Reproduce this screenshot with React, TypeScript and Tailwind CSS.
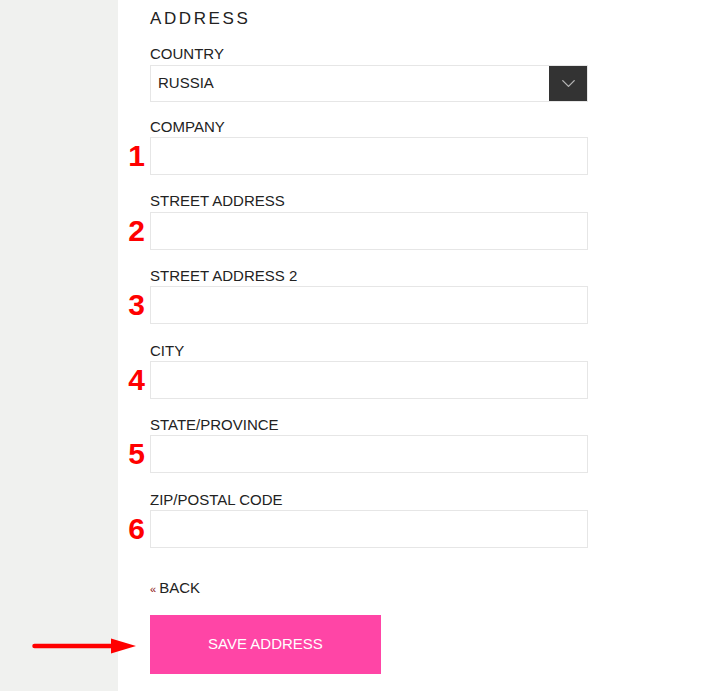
import { ChevronDown } from "lucide-react"

const fields = ["COMPANY", "STREET ADDRESS", "STREET ADDRESS 2", "CITY", "STATE/PROVINCE", "ZIP/POSTAL CODE"]

export default function App() {
  return (
    <div
      className="flex h-[691px] w-[702px] overflow-hidden bg-white text-[#222]"
      style={{ fontFamily: '"Liberation Sans", Arial, sans-serif' }}
    >
      {/* Sidebar */}
      <div className="w-[118px] shrink-0 bg-[#f0f1ef]" />

      {/* Form */}
      <div className="relative pl-[32px] pt-[8.6px]">
        <h2 className="text-[17px] leading-[20px] font-normal tracking-[2.6px]">ADDRESS</h2>

        <div className="mt-[16.5px]">
          <label className="block text-[15px] leading-[17px]">COUNTRY</label>
          <div className="mt-[3px] flex h-[37px] w-[438px] border border-[#e6e6e6]">
            <div className="flex flex-1 items-center pl-[7px] text-[15px]">RUSSIA</div>
            <div className="flex w-[38px] items-center justify-center bg-[#333]">
              <ChevronDown className="h-[23px] w-[23px] text-[#b5b5b5]" strokeWidth={1.4} />
            </div>
          </div>
        </div>

        <div className="mt-[15.7px] flex flex-col gap-[17.3px]">
          {fields.map((name, i) => (
            <div key={name}>
              <label className="block text-[15px] leading-[17px]">{name}</label>
              <div className="relative mt-[2.3px] h-[38px] w-[438px] border border-[#e6e6e6]">
                <span className="absolute right-full top-1/2 mr-[6px] -translate-y-1/2 text-[30px] leading-none font-bold text-[#ff0000]">
                  {i + 1}
                </span>
              </div>
            </div>
          ))}
        </div>

        <a className="mt-[30.6px] flex items-baseline gap-[3px] text-[15px] leading-[17px]">
          <span className="text-[11px] text-[#8b1010]">«</span>
          <span>BACK</span>
        </a>

        <div className="relative mt-[17.3px]">
          <button className="flex h-[59px] w-[231px] items-center justify-center bg-[#ff45a6] text-[15px] text-white">
            SAVE ADDRESS
          </button>
          {/* Annotation arrow */}
          <svg className="absolute left-[-118px] top-[22px]" width="106" height="18" viewBox="0 0 106 18">
            <line x1="2.5" y1="9" x2="82" y2="9" stroke="#ff0000" strokeWidth="4.5" strokeLinecap="round" />
            <polygon points="79,1.5 104,9 79,16.5" fill="#ff0000" />
          </svg>
        </div>
      </div>
    </div>
  )
}
